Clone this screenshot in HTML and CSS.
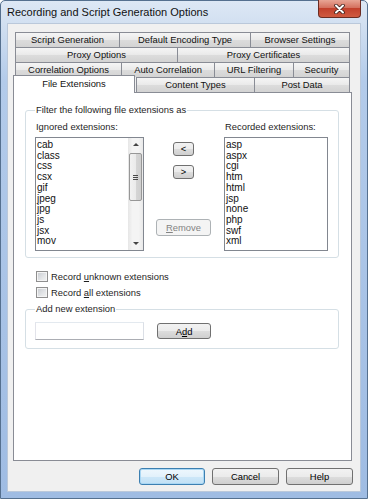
FILE: index.html
```html
<!DOCTYPE html>
<html lang="en">
  <head>
    <meta charset="UTF-8" />
    <title>Recording and Script Generation Options</title>
    <link rel="stylesheet" href="styles.css">
  </head>
  <body>
    <div class="window">
      <div class="titlebar">
        <span class="title">Recording and Script Generation Options</span>
        <span class="close-btn">
          <svg width="11" height="10" viewBox="0 0 11 10">
            <path d="M2 1.5 L9 8.5 M9 1.5 L2 8.5" stroke="#3a1d18" stroke-width="3.6" stroke-linecap="round" />
            <path d="M2 1.5 L9 8.5 M9 1.5 L2 8.5" stroke="#fff" stroke-width="2" stroke-linecap="round" />
          </svg>
        </span>
      </div>

      <div class="client">
        <div class="tabs">
          <div class="tab-row row-1">
            <div class="tab">Script Generation</div>
            <div class="tab">Default Encoding Type</div>
            <div class="tab">Browser Settings</div>
          </div>
          <div class="tab-row row-2">
            <div class="tab">Proxy Options</div>
            <div class="tab">Proxy Certificates</div>
          </div>
          <div class="tab-row row-3">
            <div class="tab">Correlation Options</div>
            <div class="tab">Auto Correlation</div>
            <div class="tab">URL Filtering</div>
            <div class="tab">Security</div>
          </div>
          <div class="tab-row row-4">
            <div class="tab selected">File Extensions</div>
            <div class="tab">Content Types</div>
            <div class="tab">Post Data</div>
          </div>

          <div class="tab-page">
            <fieldset class="group filter-group">
              <legend>Filter the following file extensions as</legend>
              <div class="filter-body">
                <div class="list-col ignored">
                  <label class="list-label">Ignored extensions:</label>
                  <div class="listbox">
                    <ul class="items">
                      <li>cab</li>
                      <li>class</li>
                      <li>css</li>
                      <li>csx</li>
                      <li>gif</li>
                      <li>jpeg</li>
                      <li>jpg</li>
                      <li>js</li>
                      <li>jsx</li>
                      <li>mov</li>
                    </ul>
                    <div class="scrollbar">
                      <div class="arrow up"></div>
                      <div class="thumb"><span class="grip"></span></div>
                      <div class="track"></div>
                      <div class="arrow down"></div>
                    </div>
                  </div>
                </div>

                <div class="move-col">
                  <button type="button" class="btn small">&lt;</button>
                  <button type="button" class="btn small">&gt;</button>
                  <button type="button" class="btn remove" disabled><u>R</u>emove</button>
                </div>

                <div class="list-col recorded">
                  <label class="list-label">Recorded extensions:</label>
                  <div class="listbox">
                    <ul class="items">
                      <li>asp</li>
                      <li>aspx</li>
                      <li>cgi</li>
                      <li>htm</li>
                      <li>html</li>
                      <li>jsp</li>
                      <li>none</li>
                      <li>php</li>
                      <li>swf</li>
                      <li>xml</li>
                    </ul>
                  </div>
                </div>
              </div>
            </fieldset>

            <div class="checks">
              <label class="check"><span class="box"></span><span>Record <u>u</u>nknown extensions</span></label>
              <label class="check"><span class="box"></span><span>Record <u>a</u>ll extensions</span></label>
            </div>

            <fieldset class="group add-group">
              <legend>Add new extension</legend>
              <div class="add-row">
                <input type="text" class="ext-input" />
                <button type="button" class="btn add">A<u>d</u>d</button>
              </div>
            </fieldset>
          </div>
        </div>

        <div class="dialog-buttons">
          <button type="button" class="btn dlg default">OK</button>
          <button type="button" class="btn dlg">Cancel</button>
          <button type="button" class="btn dlg">Help</button>
        </div>
      </div>
    </div>
  </body>
</html>
```

FILE: styles.css
```css
/* window chrome */
body {
  margin: 0;
  font-family: "Liberation Sans", Arial, sans-serif;
  font-size: 9.4px;
  color: #000;
}
.window {
  box-sizing: border-box;
  width: 368px;
  height: 499px;
  border: 1px solid #55708f;
  border-radius: 5px 5px 0 0;
  background: linear-gradient(180deg, #dde8f5 0, #d2e0f1 22px, #b3cbea 80px, #9fbce3 100%);
  display: flex;
  flex-direction: column;
}
.titlebar {
  height: 22px;
  display: flex;
  align-items: flex-start;
  padding: 0 6px;
}
.title {
  font-size: 11px;
  line-height: 22px;
  color: #111;
}
.close-btn {
  margin-left: auto;
  margin-top: -1px;
  width: 43px;
  height: 18px;
  box-sizing: border-box;
  border: 1px solid #6b2c22;
  border-top: none;
  border-radius: 0 0 4px 4px;
  background: linear-gradient(180deg, #e8a595 0, #d4715f 45%, #c2402c 50%, #cf5a40 100%);
  display: flex;
  align-items: center;
  justify-content: center;
}
.client {
  box-sizing: border-box;
  margin: 0 6px;
  height: 469px;
  border: 1px solid #bac8da;
  background: #f0f0f0;
  padding: 8px 0 0 5px;
}

/* tabs */
.tabs {
  width: 339px;
}
.tab-row {
  display: grid;
  height: 15px;
  width: 335px;
  margin-left: 2px;
}
.row-1 { grid-template-columns: 104px 131px 1fr; }
.row-2 { grid-template-columns: 162px 1fr; }
.row-3 { grid-template-columns: 106px 93px 79px 1fr; }
.row-4 { grid-template-columns: 121px 118px 1fr; }
.tab {
  border: 1px solid #898c95;
  border-width: 1px 0 0 1px;
  background: linear-gradient(180deg, #f5f5f5 0, #e9e9e9 50%, #dcdcdc 51%, #d3d3d3 100%);
  text-align: center;
  line-height: 14px;
  white-space: nowrap;
  overflow: hidden;
  color: #111;
}
.tab:last-child {
  border-right-width: 1px;
}
.tab.selected {
  position: relative;
  z-index: 1;
  margin: -2px 1px -1px -2px;
  background: #fff;
  border-right-width: 1px;
  line-height: 15px;
}
.tab-page {
  box-sizing: border-box;
  height: 369px;
  border: 1px solid #898c95;
  background: #fff;
  overflow: hidden;
}

/* group boxes */
.group {
  box-sizing: border-box;
  width: 314px;
  margin: 11px 0 0 11px;
  padding: 0 0 0 9px;
  border: 1px solid #d5dfe5;
  border-radius: 3px;
  min-width: 0;
}
.group legend {
  padding: 0 1px;
  line-height: 12px;
  color: #1e1e1e;
}
.filter-group {
  height: 154px;
}
.filter-body {
  display: flex;
  padding-top: 5px;
}
.list-col {
  display: flex;
  flex-direction: column;
}
.ignored { width: 109px; }
.recorded { width: 104px; margin-left: 13px; }
.list-label {
  line-height: 12px;
  margin-left: 1px;
  color: #1e1e1e;
}
.listbox {
  box-sizing: border-box;
  height: 114px;
  margin-top: 4px;
  border: 1px solid #828790;
  background: #fff;
  display: flex;
}
.items {
  flex: 1;
  list-style: none;
  margin: 0;
  padding: 2px 0 0 1px;
  font-size: 10px;
  line-height: 10.7px;
  color: #111;
}

/* vertical scrollbar */
.scrollbar {
  width: 15px;
  display: flex;
  flex-direction: column;
  background: linear-gradient(90deg, #e6e6e6, #f4f4f4 30%, #f4f4f4 70%, #e9e9e9);
}
.arrow {
  height: 13px;
  display: flex;
  align-items: center;
  justify-content: center;
}
.arrow::before {
  content: "";
  border-left: 3px solid transparent;
  border-right: 3px solid transparent;
}
.arrow.up::before { border-bottom: 3px solid #454545; }
.arrow.down::before { border-top: 3px solid #454545; }
.thumb {
  box-sizing: border-box;
  height: 48px;
  margin: 2px 1px 0 1px;
  border: 1px solid #979797;
  border-radius: 2px;
  background: linear-gradient(90deg, #f2f2f2 0, #ebebeb 50%, #d6d6d6 51%, #cfcfcf 100%);
  display: flex;
  align-items: center;
  justify-content: center;
}
.grip {
  width: 5px;
  height: 5px;
  background: repeating-linear-gradient(180deg, #4a4a4a 0, #4a4a4a 1px, transparent 1px, transparent 2px);
}
.track { flex: 1; }

/* buttons */
.btn {
  box-sizing: border-box;
  font-family: inherit;
  font-size: 9.4px;
  color: #000;
  padding: 0;
  border: 1px solid #707070;
  border-radius: 3px;
  background: linear-gradient(180deg, #f2f2f2 0, #ebebeb 50%, #dddddd 51%, #cfcfcf 100%);
}
.move-col {
  width: 55px;
  margin-left: 12px;
  padding-top: 21px;
  display: flex;
  flex-direction: column;
  align-items: center;
}
.btn.small {
  width: 21px;
  height: 14px;
  line-height: 12px;
  margin-bottom: 9px;
}
.btn.remove {
  width: 55px;
  height: 17px;
  margin-top: 31px;
  border-color: #adb2b5;
  background: #f4f4f4;
  color: #838383;
}

/* checkboxes */
.checks {
  margin: 12px 0 0 22px;
  display: flex;
  flex-direction: column;
  gap: 4px;
}
.check {
  display: flex;
  align-items: center;
  height: 12px;
  color: #1e1e1e;
}
.box {
  box-sizing: border-box;
  width: 12px;
  height: 11px;
  margin-right: 3px;
  border: 1px solid #8f8f8f;
  background: linear-gradient(135deg, #c6cacf 0, #e4e6e8 60%, #f2f2f2 100%);
  box-shadow: inset 0 0 0 1px #f4f4f4;
}

/* add new extension */
.add-group {
  height: 46px;
  margin-top: 5px;
}
.add-row {
  display: flex;
  align-items: center;
  padding-top: 7px;
}
.ext-input {
  box-sizing: border-box;
  width: 109px;
  height: 18px;
  margin: 0;
  border: 1px solid #abadb3;
  border-top-color: #e3e9ef;
  border-left-color: #e2e3ea;
  border-right-color: #dbdfe6;
}
.btn.add {
  width: 54px;
  height: 16px;
  margin-left: 13px;
}

/* dialog buttons */
.dialog-buttons {
  display: flex;
  justify-content: flex-end;
  padding-right: 7px;
  margin-top: 7px;
}
.btn.dlg {
  width: 67px;
  height: 17px;
  margin-left: 7px;
}
.btn.dlg.default {
  width: 66px;
  border-color: #3c7fb1;
  background: linear-gradient(180deg, #eef7fd 0, #e2f1fb 50%, #cde7f8 51%, #c1e0f5 100%);
  box-shadow: inset 0 0 0 1px #a9d7f4;
}
```
